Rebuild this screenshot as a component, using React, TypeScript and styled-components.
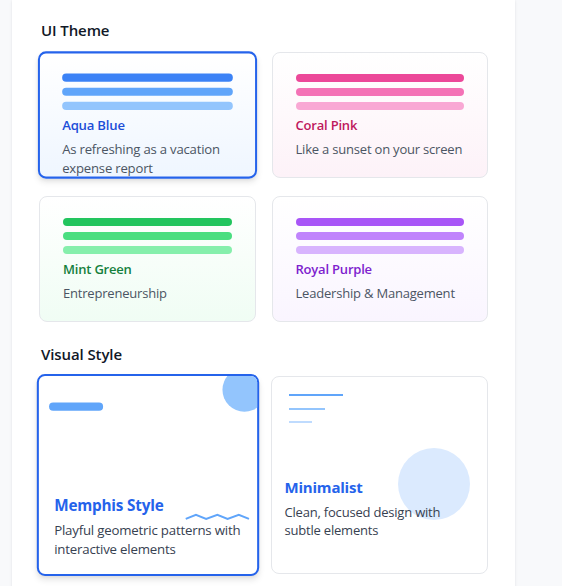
import React from "react";
import styled, { createGlobalStyle } from "styled-components";

const GlobalStyle = createGlobalStyle`
  html, body {
    margin: 0;
    padding: 0;
    overflow: hidden;
    background: #f8f9fb;
  }
  body {
    font-family: "Open Sans", "Noto Sans", sans-serif;
    color: #111827;
  }
  * { box-sizing: border-box; }
`;

const Page = styled.div`
  padding-left: 12px;
  width: 515px;
`;

const Panel = styled.main`
  background: #ffffff;
  min-height: 620px;
  padding: 21px 27px 24px;
  box-shadow: 0 1px 3px rgba(15, 23, 42, 0.08), 0 0 1px rgba(15, 23, 42, 0.06);
`;

const Section = styled.section<{ $gapTop?: number }>`
  margin-top: ${(p) => p.$gapTop ?? 0}px;
`;

const SectionTitle = styled.h3`
  margin: 0 0 13px 2px;
  font-size: 15px;
  line-height: 18px;
  font-weight: 600;
  color: #111827;
  letter-spacing: -0.1px;
`;

const ThemeGrid = styled.div`
  display: grid;
  grid-template-columns: 1fr 1fr;
  grid-auto-rows: 126px;
  column-gap: 16px;
  row-gap: 18px;
`;

const ThemeCard = styled.div<{ $selected?: boolean; $tint: string }>`
  border-radius: 8px;
  border: ${(p) => (p.$selected ? "2px solid #2563eb" : "1px solid #e5e7eb")};
  padding: ${(p) => (p.$selected ? "20px 22px 0" : "21px 23px 0")};
  background: linear-gradient(to bottom, #ffffff, ${(p) => p.$tint});
  transform: ${(p) => (p.$selected ? "scale(1.01)" : "none")};
  box-shadow: ${(p) =>
    p.$selected
      ? "0 4px 6px -1px rgba(0,0,0,0.1), 0 2px 4px -2px rgba(0,0,0,0.08)"
      : "none"};
  cursor: pointer;
`;

const Bars = styled.div`
  display: flex;
  flex-direction: column;
  gap: 6px;
`;

const Bar = styled.div<{ $color: string }>`
  height: 8px;
  border-radius: 4px;
  background: ${(p) => p.$color};
`;

const ThemeName = styled.div<{ $color: string }>`
  margin-top: 6px;
  font-size: 13px;
  line-height: 18px;
  font-weight: 600;
  letter-spacing: -0.2px;
  color: ${(p) => p.$color};
`;

const ThemeDesc = styled.div`
  margin-top: 6px;
  font-size: 13px;
  line-height: 18px;
  letter-spacing: -0.2px;
  color: #4b5563;
`;

const StyleGrid = styled.div`
  display: grid;
  grid-template-columns: 1fr 1fr;
  column-gap: 14px;
`;

const StyleCard = styled.div<{ $selected?: boolean; $pad: string }>`
  position: relative;
  overflow: hidden;
  height: 198px;
  border-radius: 8px;
  border: ${(p) => (p.$selected ? "2px solid #2563eb" : "1px solid #e5e7eb")};
  padding: ${(p) => p.$pad};
  background: #ffffff;
  display: flex;
  flex-direction: column;
  justify-content: flex-end;
  transform: ${(p) => (p.$selected ? "scale(1.02)" : "none")};
  box-shadow: ${(p) =>
    p.$selected
      ? "0 4px 6px -1px rgba(0,0,0,0.1), 0 2px 4px -2px rgba(0,0,0,0.08)"
      : "none"};
  cursor: pointer;
`;

const StyleContent = styled.div`
  position: relative;
  z-index: 1;
`;

const StyleName = styled.div`
  font-size: 15px;
  line-height: 20px;
  font-weight: 700;
  letter-spacing: -0.2px;
  color: #2563eb;
  margin-bottom: 6px;
`;

const StyleDesc = styled.div`
  font-size: 13px;
  line-height: 18px;
  letter-spacing: -0.2px;
  color: #374151;
`;

const MemphisCircle = styled.div`
  position: absolute;
  top: -8px;
  right: -9px;
  width: 43px;
  height: 43px;
  border-radius: 50%;
  background: #93c5fd;
`;

const MemphisPill = styled.div`
  position: absolute;
  top: 26px;
  left: 10px;
  width: 53px;
  height: 8px;
  border-radius: 4px;
  background: #60a5fa;
`;

const Zigzag = styled.svg`
  position: absolute;
  right: 7px;
  bottom: 51px;
`;

const MinimalLines = styled.div`
  position: absolute;
  top: 17px;
  left: 17px;
  display: flex;
  flex-direction: column;
  gap: 11.5px;
`;

const MinimalLine = styled.div<{ $w: number; $color: string }>`
  width: ${(p) => p.$w}px;
  height: 2px;
  background: ${(p) => p.$color};
`;

const MinimalCircle = styled.div`
  position: absolute;
  right: 17px;
  bottom: 53px;
  width: 72px;
  height: 72px;
  border-radius: 50%;
  background: #dbeafe;
`;

const themes = [
  {
    name: "Aqua Blue",
    desc: "As refreshing as a vacation expense report",
    bars: ["#3b82f6", "#60a5fa", "#93c5fd"],
    title: "#1d4ed8",
    tint: "#eff6ff",
    selected: true,
  },
  {
    name: "Coral Pink",
    desc: "Like a sunset on your screen",
    bars: ["#ec4899", "#f472b6", "#f9a8d4"],
    title: "#be185d",
    tint: "#fdf2f8",
  },
  {
    name: "Mint Green",
    desc: "Entrepreneurship",
    bars: ["#22c55e", "#4ade80", "#86efac"],
    title: "#15803d",
    tint: "#f0fdf4",
  },
  {
    name: "Royal Purple",
    desc: "Leadership & Management",
    bars: ["#a855f7", "#c084fc", "#d8b4fe"],
    title: "#7e22ce",
    tint: "#faf5ff",
  },
];

export default function App() {
  return (
    <>
      <GlobalStyle />
      <Page>
        <Panel>
          <Section>
            <SectionTitle>UI Theme</SectionTitle>
            <ThemeGrid>
              {themes.map((t) => (
                <ThemeCard key={t.name} $selected={t.selected} $tint={t.tint}>
                  <Bars>
                    {t.bars.map((c) => (
                      <Bar key={c} $color={c} />
                    ))}
                  </Bars>
                  <ThemeName $color={t.title}>{t.name}</ThemeName>
                  <ThemeDesc>{t.desc}</ThemeDesc>
                </ThemeCard>
              ))}
            </ThemeGrid>
          </Section>
          <Section $gapTop={23}>
            <SectionTitle>Visual Style</SectionTitle>
            <StyleGrid>
              <StyleCard $selected $pad="0 8px 16px 15px">
                <MemphisCircle />
                <MemphisPill />
                <Zigzag width="64" height="10" viewBox="0 0 64 10">
                  <polyline
                    points="1,7 11,3 21,7 32,3 42,7 53,3 63,7"
                    fill="none"
                    stroke="#60a5fa"
                    strokeWidth="2"
                  />
                </Zigzag>
                <StyleContent>
                  <StyleName>Memphis Style</StyleName>
                  <StyleDesc>Playful geometric patterns with interactive elements</StyleDesc>
                </StyleContent>
              </StyleCard>
              <StyleCard $pad="0 12px 34px 13px">
                <MinimalLines>
                  <MinimalLine $w={54} $color="#60a5fa" />
                  <MinimalLine $w={36} $color="#93c5fd" />
                  <MinimalLine $w={23} $color="#bfdbfe" />
                </MinimalLines>
                <MinimalCircle />
                <StyleContent>
                  <StyleName>Minimalist</StyleName>
                  <StyleDesc>Clean, focused design with subtle elements</StyleDesc>
                </StyleContent>
              </StyleCard>
            </StyleGrid>
          </Section>
        </Panel>
      </Page>
    </>
  );
}
